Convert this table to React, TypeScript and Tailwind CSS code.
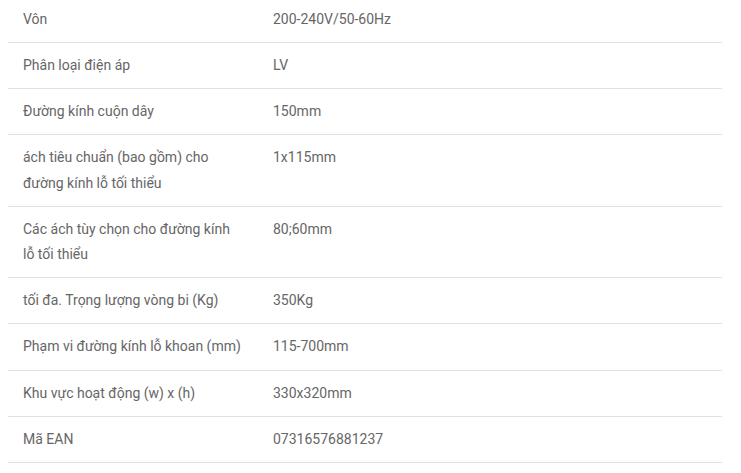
const rows: [string, string][] = [
  ["Vôn", "200-240V/50-60Hz"],
  ["Phân loại điện áp", "LV"],
  ["Đường kính cuộn dây", "150mm"],
  ["ách tiêu chuẩn (bao gồm) cho đường kính lỗ tối thiểu", "1x115mm"],
  ["Các ách tùy chọn cho đường kính lỗ tối thiểu", "80;60mm"],
  ["tối đa. Trọng lượng vòng bi (Kg)", "350Kg"],
  ["Phạm vi đường kính lỗ khoan (mm)", "115-700mm"],
  ["Khu vực hoạt động (w) x (h)", "330x320mm"],
  ["Mã EAN", "07316576881237"],
]

export default function App() {
  return (
    <div className="w-[741px] h-[473px] overflow-hidden bg-white font-['Roboto',sans-serif] text-[14px] leading-[1.8] text-[#666]">
      <div className="ml-2 w-[714px] -mt-[3.2px]">
        {rows.map(([label, value]) => (
          <div key={label} className="flex border-b border-[#dde2e4] py-[10px]">
            <div className="w-[250px] px-[15px]">{label}</div>
            <div className="flex-1 px-[15px]">{value}</div>
          </div>
        ))}
      </div>
    </div>
  )
}
